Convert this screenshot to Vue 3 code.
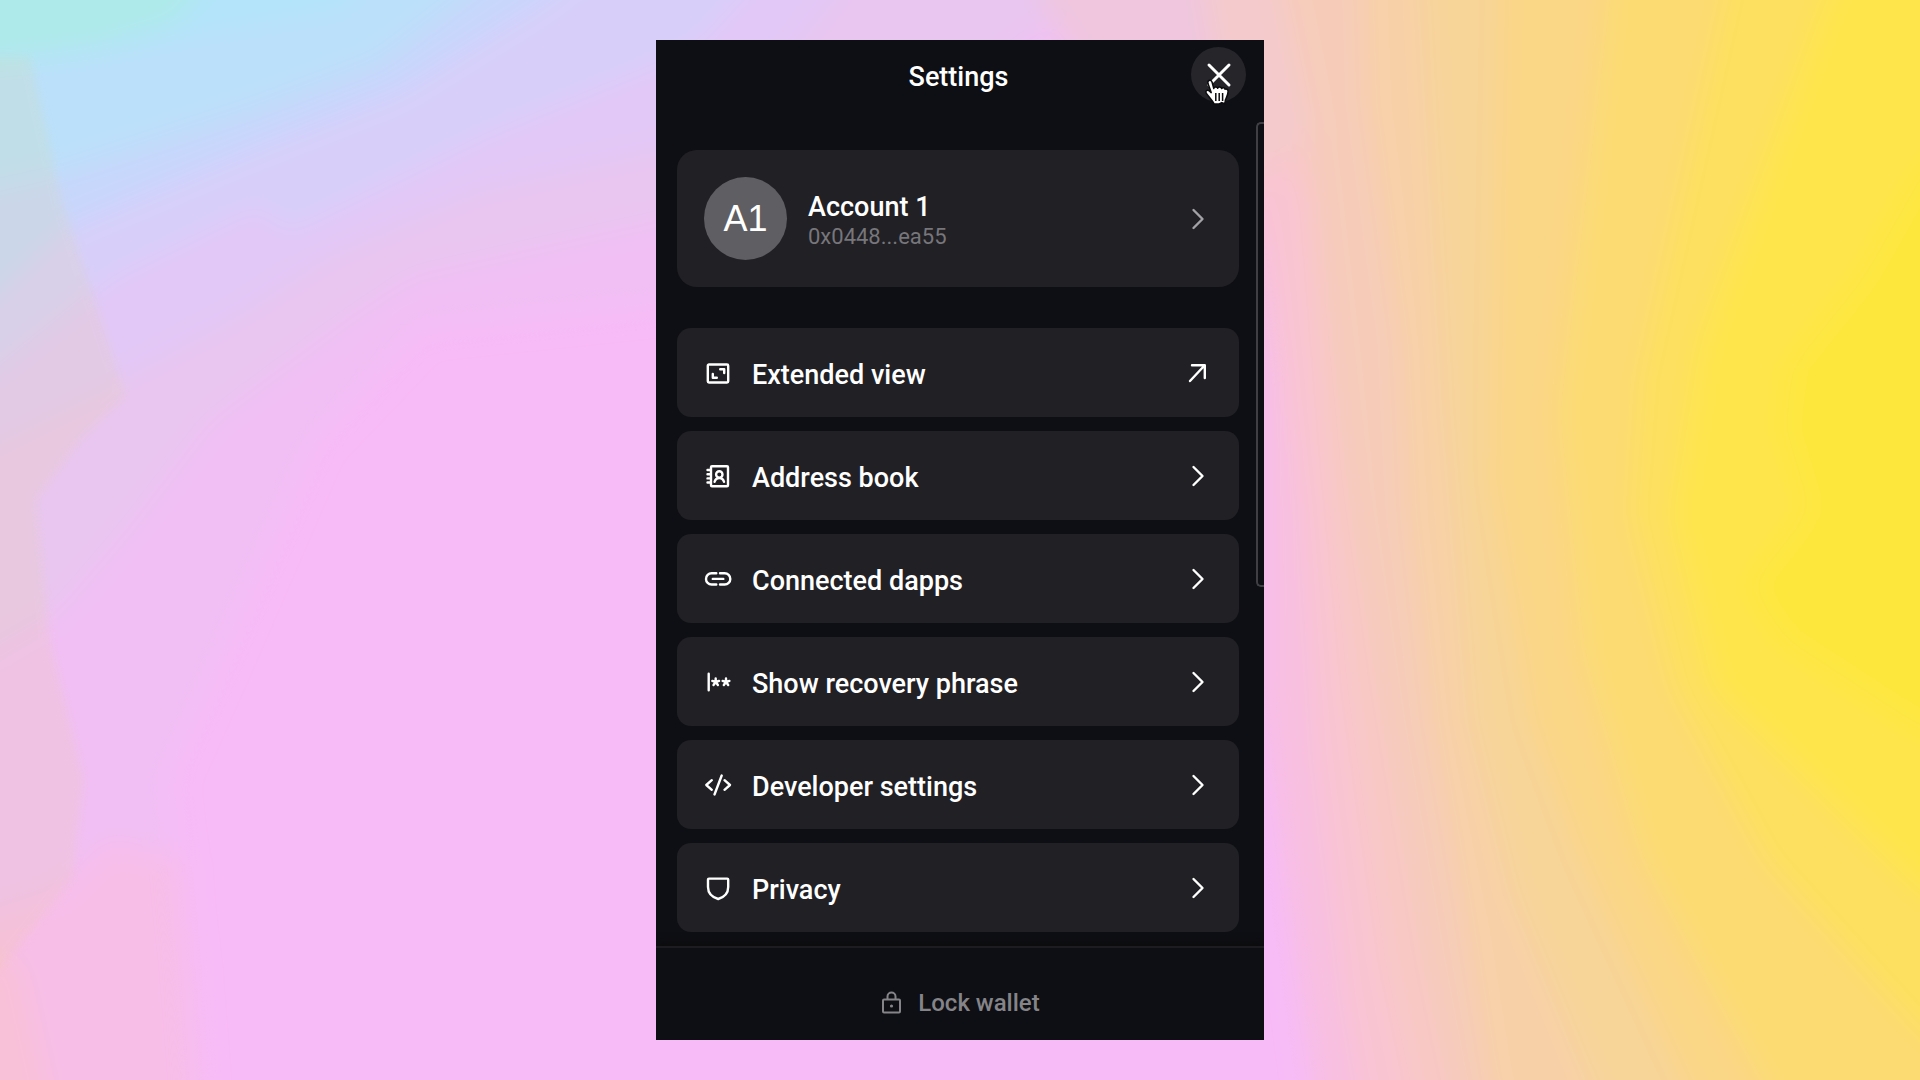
<script setup>
const items = [
  { label: 'Extended view', icon: 'expand', trail: 'arrow' },
  { label: 'Address book', icon: 'book', trail: 'chevron' },
  { label: 'Connected dapps', icon: 'link', trail: 'chevron' },
  { label: 'Show recovery phrase', icon: 'phrase', trail: 'chevron' },
  { label: 'Developer settings', icon: 'code', trail: 'chevron' },
  { label: 'Privacy', icon: 'shield', trail: 'chevron' },
]

const icons = {
  expand:
    'M5 5.500h18a1.200 1.200 0 0 1 1.200 1.200v15.600a1.200 1.200 0 0 1-1.200 1.200h-18a1.200 1.200 0 0 1-1.200-1.200v-15.600a1.200 1.200 0 0 1 1.200-1.200zM8.800 15v3.700h4M16.200 10.300h4v3.700',
  book:
    'M8 4.200h15a1 1 0 0 1 1 1v18a1 1 0 0 1-1 1h-15a1 1 0 0 1-1-1v-18a1 1 0 0 1 1-1zM3.500 8h3.500M3.500 12.200h3.500M3.500 16.400h3.500M3.500 20.500h3.500M15.300 9.200a3.200 3.200 0 1 1 0 6.400a3.200 3.200 0 1 1 0-6.400zM10.600 19.800c.6-2.400 2-3.800 4.700-3.800s4.100 1.400 4.700 3.800',
  link:
    'M12.300 8.300h-4.700a5.600 5.600 0 0 0 0 11.200h4.700M16 8.300h4.700a5.600 5.600 0 0 1 0 11.200h-4.700M8.800 13.900h10.500',
  phrase:
    'M4.700 5.700v16.500M11.700 14v-3.600M11.700 14l3.400-1.100M11.700 14l2.200 3M11.700 14l-2.200 3M11.700 14l-3.400-1.100M22 14v-3.600M22 14l3.400-1.100M22 14l2.200 3M22 14l-2.200 3M22 14l-3.400-1.100',
  code: 'M7.800 9.200l-5.500 4.800 5.500 4.800M20.500 9.200l5.500 4.800-5.500 4.800M17.700 4.500l-7.200 19',
  shield:
    'M5 4.600h18.200a1 1 0 0 1 1 1v7.400c0 6.500-4 10.200-10 12-6-1.800-10.200-5.500-10.200-12v-7.400a1 1 0 0 1 1-1z',
}

const trails = {
  chevron: 'M9.500 5l9 9-9 9',
  arrow: 'M6 22l14.500-15.500M8 6.200h12.800v12.800',
}

const cool = [
  { fill: '#f1bff4', d: 'M-60-60H1270V60L1000 180 800 270 660 305 421 330 316 440 223 654 168 778 190 964 204 1140H-60z' },
  { fill: '#e8c6f0', d: 'M-60-60H1160L1000 60 800 170 660 220 412 275 349 317 210 420 126 530 55 613-60 680z' },
  { fill: '#e2c8f7', d: 'M-60-60H880L760 90 660 150 480 190 330 255 230 320 110 385-60 470z' },
  { fill: '#d7cffa', d: 'M-60-60H790L700 40 660 62 492 131 286 231 261 203 114 275-60 415z' },
  { fill: '#c7d7fb', d: 'M-60-60H620L543 0 400 90 261 145 67 227-60 350z' },
  { fill: '#bbe0fa', d: 'M-60-60H540L459 0 379 62 252 110 63 172-60 200z' },
  { fill: '#b3e4fa', d: 'M-60-60H400L345 10 200 35 60 60-60 70z' },
  { fill: '#aeeae9', d: 'M-60-60H230L177 20 100 44 0 58-60 64z' },
]

const warm = [
  { fill: '#efc6de', d: 'M1040-60L1040 0 1100 100 1260 160 1290 120 1310-60z' },
  { fill: '#f8bfe1', d: 'M1235-60L1235 200 1262 370 1262 700 1290 920 1320 1140H1980V-60z' },
  { fill: '#f9c4d2', d: 'M1215-60L1240 120 1270 270 1300 510 1315 758 1344 1000 1368 1140H1980V-60z' },
  { fill: '#f8c8c5', d: 'M1220-60L1250 60 1306 200 1325 482 1345 689 1383 964 1420 1140H1980V-60z' },
  { fill: '#f4cacc', d: 'M1195-60L1215 60 1240 200 1312 130 1285 0 1280-60z' },
  { fill: '#f6ccb9', d: 'M1270-60L1285 0 1310 124 1350 482 1382 689 1428 964 1465 1140H1980V-60z' },
  { fill: '#f8d0a8', d: 'M1360-60L1365 103 1397 344 1405 516 1428 723 1458 895 1487 1080 1510 1140H1980V-60z' },
  { fill: '#f7d498', d: 'M1415-60L1422 0 1445 413 1470 723 1512 895 1588 1080 1620 1140H1980V-60z' },
  { fill: '#fad687', d: 'M1500-60L1498 0 1489 482 1529 723 1580 861 1681 1080 1710 1140H1980V-60z' },
  { fill: '#fcdb73', d: 'M1610-60L1605 0 1555 413 1580 654 1639 861 1757 1080 1790 1140H1980V-60z' },
  { fill: '#fde05f', d: 'M1740-60L1723 0 1639 379 1630 516 1672 689 1765 861 1920 1033 1980 1080V-60z' },
  { fill: '#fee54c', d: 'M1860-60L1828 0 1702 344 1675 516 1715 689 1807 778 1920 888 1980 930V-60z' },
  { fill: '#fde73c', d: 'M1980 110L1920 172 1862 275 1790 365 1782 427 1807 510 1748 585 1782 640 1920 730 1980 745z' },
]
</script>

<template>
  <main class="page">
    <svg class="backdrop" viewBox="0 0 1920 1080" preserveAspectRatio="none" aria-hidden="true">
      <defs>
        <filter id="soft" x="-10%" y="-10%" width="120%" height="120%">
          <feGaussianBlur stdDeviation="14" />
        </filter>
        <filter id="edge" x="-50%" y="-20%" width="200%" height="140%">
          <feGaussianBlur stdDeviation="5" />
        </filter>
      </defs>
      <rect width="1920" height="1080" fill="#f7bbf7" />
      <g filter="url(#soft)">
        <path v-for="band in cool" :key="band.fill" :fill="band.fill" :d="band.d" />
        <path fill="#f7bee8" d="M-60 930L60 890 110 840 180 860 200 1140H-60z" />
        <path fill="#f9c1d8" d="M-60 940L20 960 60 1140H-60z" />
        <path v-for="band in warm" :key="band.fill" :fill="band.fill" :d="band.d" />
      </g>
      <path
        class="tint"
        filter="url(#edge)"
        d="M-20 57H30L62 200 126 395 80 440 36 500 50 640 84 780 72 880 0 970H-20z"
      />
    </svg>

    <section class="panel" aria-label="Settings">
      <header class="header">
        <h1 class="title">Settings</h1>
        <button class="close" type="button" aria-label="Close">
          <svg viewBox="0 0 28 28" class="icon close-icon" aria-hidden="true">
            <path d="M4 4l20 20M24 4l-20 20" />
          </svg>
          <svg class="cursor" viewBox="0 0 30 30" aria-hidden="true">
            <path
              d="M8 3.500c1.600-.7 2.700.3 3.100 1.800l1.700 6.200c.2-1.800 3.300-2 3.900-.3.600-1.500 3.300-1.500 3.900.3.800-1.200 3.200-.9 3.500.8 1-.9 3 .1 3 2-.1 4.500-2.200 7-2.800 9l-.3 3.300-3.300-1-3 1.500h-4.500c-2-4.200-5.300-7.200-7.800-10.700-1.500-2 .5-4 2.500-2.700l2.300 1.900-3.200-9c-.4-1.300 0-2.600 1-3.100z"
            />
            <path class="creases" d="M14.800 16v8M18.200 16v8M21.600 16v8" />
          </svg>
        </button>
      </header>

      <div class="body">
        <button class="account" type="button">
          <span class="avatar">A1</span>
          <span class="identity">
            <span class="name">Account 1</span>
            <span class="address">0x0448...ea55</span>
          </span>
          <svg viewBox="0 0 28 28" class="icon muted" aria-hidden="true">
            <path :d="trails.chevron" />
          </svg>
        </button>

        <nav class="menu" aria-label="Settings sections">
          <button v-for="item in items" :key="item.label" class="row" type="button">
            <svg viewBox="0 0 28 28" class="icon" aria-hidden="true">
              <path :d="icons[item.icon]" />
            </svg>
            <span class="label">{{ item.label }}</span>
            <svg viewBox="0 0 28 28" class="icon" aria-hidden="true">
              <path :d="trails[item.trail]" />
            </svg>
          </button>
        </nav>
        <span class="thumb"></span>
      </div>

      <footer class="footer">
        <button class="lock" type="button">
          <svg viewBox="0 0 24 24" class="lock-icon" aria-hidden="true">
            <path
              d="M4 8.500h15a1 1 0 0 1 1 1v11a1 1 0 0 1-1 1h-15a1 1 0 0 1-1-1v-11a1 1 0 0 1 1-1zM7.500 8.500v-3a4 4 0 0 1 8 0v3"
            />
            <circle cx="11.500" cy="15" r="1.600" />
          </svg>
          <span>Lock wallet</span>
        </button>
      </footer>
    </section>
  </main>
</template>

<style>
body {
  margin: 0;
}
</style>

<style scoped>
.page {
  position: relative;
  box-sizing: border-box;
  display: flex;
  justify-content: center;
  align-items: flex-start;
  min-height: 100vh;
  padding: 40px 0;
  background: #f7bbf7;
  font-family: Roboto, "Liberation Sans", sans-serif;
  overflow: hidden;
}

.backdrop {
  position: absolute;
  inset: 0;
  width: 100%;
  height: 100%;
}

.tint {
  fill: #e4d680;
  opacity: 0.14;
}

.panel {
  position: relative;
  box-sizing: border-box;
  width: 100%;
  max-width: 608px;
  background: #0e0f14;
  color: #ffffff;
  overflow: hidden;
}

button {
  margin: 0;
  border: 0;
  color: inherit;
  font: inherit;
  text-align: left;
  cursor: pointer;
}

.header {
  display: grid;
  grid-template-columns: 55px 1fr 55px;
  align-items: center;
  padding: 7px 18px 7px 15px;
}

.title {
  grid-column: 2;
  margin: 0;
  padding-top: 4px;
  font-size: 27px;
  line-height: 32px;
  font-weight: 500;
  text-align: center;
}

.close {
  position: relative;
  display: grid;
  place-items: center;
  width: 55px;
  height: 55px;
  padding: 0;
  border-radius: 50%;
  background: #25252a;
}

.icon {
  flex: none;
  width: 28px;
  height: 28px;
  fill: none;
  stroke: #ffffff;
  stroke-width: 2.4;
  stroke-linecap: round;
  stroke-linejoin: round;
}

.close-icon {
  stroke-width: 3;
}

.cursor {
  position: absolute;
  left: 10px;
  top: 30px;
  width: 30px;
  height: 30px;
  fill: #ffffff;
  stroke: #0b0b0d;
  stroke-width: 1.5;
  stroke-linejoin: round;
}

.body {
  position: relative;
  display: flex;
  flex-direction: column;
  gap: 41px;
  padding: 41px 25px 14px 21px;
}

.account {
  display: flex;
  align-items: center;
  gap: 21px;
  padding: 27px;
  border-radius: 20px;
  background: #212025;
}

.avatar {
  display: grid;
  place-items: center;
  width: 83px;
  height: 83px;
  border-radius: 50%;
  background: #5f5e63;
  font-family: "Liberation Sans", sans-serif;
  font-size: 36px;
}

.identity {
  display: flex;
  flex: 1;
  flex-direction: column;
  padding-top: 4px;
}

.name {
  font-size: 27px;
  line-height: 32px;
  font-weight: 500;
}

.address {
  color: #77767b;
  font-size: 22px;
  line-height: 28px;
}

.muted {
  stroke: #a3a2a6;
}

.menu {
  display: flex;
  flex-direction: column;
  gap: 14px;
}

.row {
  display: flex;
  align-items: center;
  gap: 20px;
  height: 89px;
  padding: 0 27px;
  border-radius: 14px;
  background: #212025;
}

.label {
  flex: 1;
  padding-top: 4px;
  font-size: 27px;
  line-height: 32px;
  font-weight: 500;
}

.thumb {
  position: absolute;
  top: 13px;
  right: 0;
  box-sizing: border-box;
  width: 8px;
  height: 465px;
  border: 2px solid #3f3f44;
  border-right: 0;
  border-radius: 5px 0 0 5px;
}

.footer {
  position: relative;
  display: flex;
  justify-content: center;
  padding: 41px 0 23px;
  border-top: 2px solid #1c1c21;
  box-shadow: 0 -2px 8px #0b0b0c;
}

.lock {
  display: flex;
  align-items: center;
  gap: 14px;
  padding: 0;
  background: none;
  color: #858488;
  font-size: 24px;
  line-height: 28px;
  font-weight: 500;
}

.lock-icon {
  width: 24px;
  height: 24px;
  fill: none;
  stroke: currentColor;
  stroke-width: 2;
}

.lock-icon circle {
  fill: currentColor;
  stroke: none;
}
</style>
